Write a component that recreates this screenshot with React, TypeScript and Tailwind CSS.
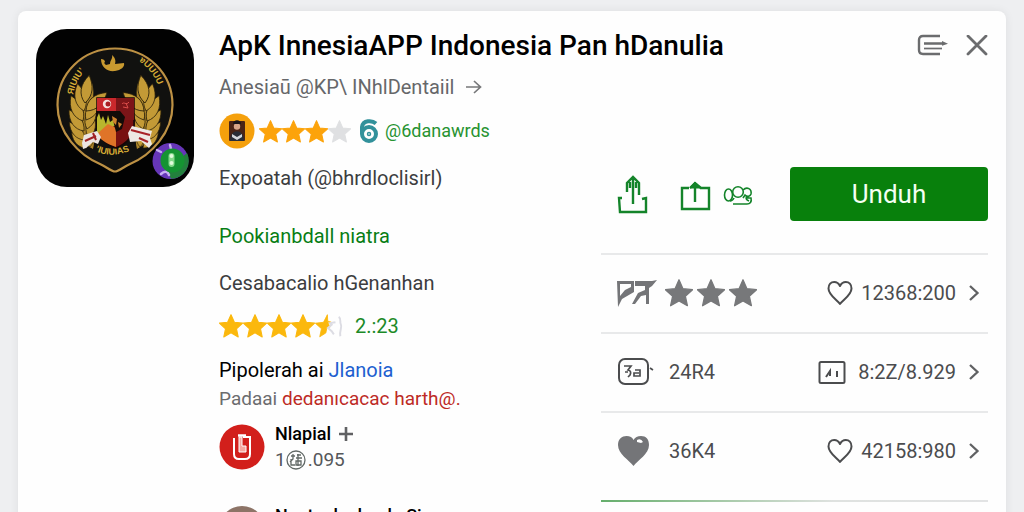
import type { ReactNode } from "react";

const STAR = "M12 1.6l3.1 7 7.6.8-5.7 5.1 1.6 7.5L12 18.2 5.4 22 7 14.5 1.3 9.4l7.6-.8z";

function Star({ className }: { className: string }) {
  return (
    <svg viewBox="1 1 22 22" fill="currentColor" className={className} aria-hidden="true">
      <path d={STAR} strokeLinejoin="round" stroke="currentColor" strokeWidth="1" />
    </svg>
  );
}

function HalfStar() {
  return (
    <svg viewBox="1 1 26 22" className="h-6 w-7" aria-hidden="true">
      <path d="M12.500 1.500L8.900 8.600 1.300 9.400 7 14.500 5.400 22 11 18.500l1-4.500 3-1-2-4 3-.5-3.200-1z" fill="#fbb80d" stroke="#fbb80d" strokeWidth="0.8" />
      <path d="M20 8.500l-5 .8 1.500 1.500-3.500 3 3.500 3 2 3M23 3.500c3 2 .5 5 2 7 1.500 3-1.500 5-.5 11" fill="none" stroke="#dcdce3" strokeWidth="1.800" />
    </svg>
  );
}

function Leaf({ x, y, r, s = 1 }: { x: number; y: number; r: number; s?: number }) {
  return (
    <path
      d="M0 0C-7-4-9-12-5-21C1-15 4-8 0 0Z"
      transform={`translate(${x} ${y}) rotate(${r}) scale(${s})`}
      fill="#c39a36"
      stroke="#2a200a"
      strokeWidth="0.6"
    />
  );
}

function Wing() {
  return (
    <g>
      <path d="M57 120C40 112 35 92 44 68L56 54C60 66 54 80 55 92C56 102 60 110 57 120Z" fill="#a98329" />
      <Leaf x={51} y={119} r={-32} s={1} />
      <Leaf x={49} y={111} r={-28} s={1.1} />
      <Leaf x={48} y={102} r={-22} s={1.2} />
      <Leaf x={47} y={92} r={-12} s={1.3} />
      <Leaf x={48} y={82} r={0} s={1.3} />
      <Leaf x={49} y={74} r={22} s={1.3} />
      <Leaf x={54} y={118} r={14} s={1} />
      <Leaf x={53} y={109} r={24} s={1.1} />
      <Leaf x={51} y={100} r={32} s={1.2} />
      <Leaf x={50} y={91} r={46} s={1.3} />
      <Leaf x={50} y={82} r={62} s={1.3} />
    </g>
  );
}

function AppLogo() {
  return (
    <svg viewBox="0 0 158 158" className="size-[158px] shrink-0" role="img" aria-label="ApK">
      <defs>
        <path id="arcLeft" d="M37 66A50 50 0 0 1 56 35" />
        <path id="arcRight" d="M103 32A50 50 0 0 1 124 64" />
        <path id="arcBottom" d="M59 122Q79 131 101 118" />
      </defs>
      <rect width="158" height="158" rx="31" fill="#020202" />
      <path
        d="M79 19.500C111 19.500 136.500 44 136.500 76C136.500 104 115 126 94 135C87 138 83 142.500 79 142.500C75 142.500 71 138 64 135C43 126 21.500 104 21.500 76C21.500 44 47 19.500 79 19.500Z"
        fill="#11110f"
        stroke="#bd9144"
        strokeWidth="2.200"
      />
      <g fill="#d8ad35" fontFamily="Liberation Sans, sans-serif" fontSize="9" fontWeight="700">
        <text><textPath href="#arcLeft">ЯIUIU’</textPath></text>
        <text><textPath href="#arcRight">ɐUUUU</textPath></text>
        <text><textPath href="#arcBottom">’IUIUIAS</textPath></text>
      </g>
      <path d="M65 30c2 0 4 1 4 3-1 0-1 2 1 3l4-1c0-4 3-5 2-9 3 3 4 5 3 9l9-1c1 4-3 7-9 8-8 1-14-4-14-12Z" fill="#c99a30" />
      <Wing />
      <g transform="translate(158 0) scale(-1 1)"><Wing /></g>
      <path d="M61 69H98V98C98 107 90 115 80 119C69 115 61 107 61 98Z" fill="#781110" stroke="#160706" strokeWidth="1.500" />
      <path d="M61 69H80V82H61Z" fill="#c9282c" />
      <path d="M80 69H98V91H80Z" fill="#7c1518" />
      <path d="M61 82H80V96L61 107Z" fill="#b9b62d" />
      <path d="M61 105L72 95L80 99V118C71 115 63 110 61 105Z" fill="#df7428" />
      <path d="M60 82h24l5 6-3 12-6 3-3-12-3 2-2-7-2 9-3-8-2 4-2-7-3 7Z" fill="#130b08" />
      <path d="M76 87l5 3-1 6-3-3Z M82 93l4 2-3 4Z" fill="#cf822e" />
      <circle cx="71" cy="75" r="4.200" fill="#f4e2df" />
      <circle cx="72" cy="75" r="2.500" fill="#a91e23" />
      <path d="M86 75c2-3 4 2 7-2M87 78l5 1-2-5" stroke="#dc4d4a" strokeWidth="1" fill="none" />
      <path d="M46 114l2-8 13-4 4 6-3 7-5-2-7 6-3 1Z" fill="#ebe5e1" />
      <path d="M49 112l11-5M57 104l3 7" stroke="#a02124" strokeWidth="2" />
      <path d="M92 104l2 9 11-1 8 7 3-4-2-6 2-7-20-5Z" fill="#eee8e4" />
      <path d="M95 101l19 5M103 109l9 4" stroke="#a82228" strokeWidth="2.200" />
      <circle cx="134.500" cy="132" r="18" fill="#6636b8" />
      <path d="M151 124A18 18 0 0 1 135 149.800L131 141Z" fill="#23803d" />
      <path d="M121 121l4 2M134 116l1 4M125 145c4-4 7-2 8 1" stroke="#c7aef2" strokeWidth="2.500" strokeLinecap="round" fill="none" />
      <circle cx="136.500" cy="131.500" r="12" fill="#159332" />
      <rect x="132.500" y="124" width="6" height="14" rx="3" fill="#83d98a" />
      <circle cx="135.500" cy="127" r="2" fill="#e1fbdc" />
      <circle cx="135.500" cy="134" r="2" fill="#e1fbdc" />
    </svg>
  );
}

function Heart({ className }: { className: string }) {
  return (
    <svg viewBox="0 0 26 26" className={className} fill="none" stroke="currentColor" strokeWidth="2" strokeLinejoin="round" aria-hidden="true">
      <path d="M13 24C10 20 1.500 15 1.500 8.500C1.500 4.500 4 2 7.200 2C9.800 2 11.800 3.500 13 6C14.200 3.500 16.200 2 18.800 2C22 2 24.500 4.500 24.500 8.500C24.500 15 16 20 13 24Z" />
    </svg>
  );
}

function Chevron() {
  return (
    <svg viewBox="0 0 12 18" className="h-[18px] w-3" fill="none" stroke="#606163" strokeWidth="2.300" aria-hidden="true">
      <path d="M2 2l7.500 7L2 16" />
    </svg>
  );
}

function StatRow({ left, icon, value, last }: { left: ReactNode; icon: ReactNode; value: string; last?: boolean }) {
  return (
    <li className={last ? "pb-3" : "border-b-2 border-[#e8e9ea] pb-0.5"}>
      <a href="#details" className="flex h-[75px] items-center justify-between pr-2 pl-4 text-xl text-[#4b4c4e]">
        <span className="flex items-center">{left}</span>
        <span className="flex items-center">
          {icon}
          <span className="mr-3 ml-2">{value}</span>
          <Chevron />
        </span>
      </a>
    </li>
  );
}

export default function App() {
  return (
    <div className="h-screen overflow-hidden bg-[#eeeff1] px-[18px] pt-[11px] font-[Roboto,sans-serif] whitespace-nowrap">
      <main className="flex min-h-full gap-[25px] rounded-t-lg bg-[#fefefe] px-[18px] pt-[18px] shadow-[0_0_10px_rgba(0,0,0,0.07)]">
        <AppLogo />
        <div className="min-w-0 flex-1">
          <header className="flex h-[34px] items-center justify-between">
            <h1 className="text-[28px] font-medium text-black">ApK InnesiaAPP Indonesia Pan hDanulia</h1>
            <div className="flex items-center gap-4 text-[#6b6c6e]">
              <button aria-label="Menu">
                <svg viewBox="0 0 34 24" className="h-6 w-[34px]" fill="none" stroke="currentColor" strokeWidth="2.400" aria-hidden="true">
                  <path d="M24 2H7Q3 2 3 6V16Q3 20 7 20H24M8 9.500H27" />
                  <path d="M8 14.500H26" strokeWidth="1.700" />
                  <path d="M26 7l6 2.800-6 2Z" fill="currentColor" stroke="none" />
                </svg>
              </button>
              <button aria-label="Close">
                <svg viewBox="0 0 22 22" className="size-[22px]" stroke="currentColor" strokeWidth="2.800" strokeLinecap="round" aria-hidden="true">
                  <path d="M2 1l18 18M20 1L2 19" />
                </svg>
              </button>
            </div>
          </header>

          <div className="flex justify-between">
            <section className="pt-3 text-xl leading-6 text-[#3c3d3f]">
              <p className="flex items-center gap-3 text-[#66676a]">
                Anesiaū @KP\ INhlDentaiil
                <svg viewBox="0 0 16 16" className="size-4" fill="none" stroke="#77787a" strokeWidth="1.700" aria-hidden="true">
                  <path d="M0 8h14M8 2l6.500 6L8 14" />
                </svg>
              </p>
              <div className="mt-3 flex h-10 items-center">
                <svg viewBox="0 0 36 36" className="size-9" aria-hidden="true">
                  <circle cx="18" cy="18" r="17.500" fill="#f5a00c" />
                  <rect x="10" y="8" width="16" height="20" rx="1" fill="#4b2416" />
                  <circle cx="18" cy="13.500" r="3.200" fill="#d8a488" />
                  <path d="M14 11c0-5 8-5 8 0Z" fill="#1b1519" />
                  <path d="M11 28c0-13 14-13 14 0Z" fill="#292d38" />
                  <path d="M13 21l5 3 5-3v3l-5 3-5-3Z" fill="#d4d7dd" />
                </svg>
                <div className="ml-1 flex">
                  <Star className="size-[23px] text-[#fca30b]" />
                  <Star className="size-[23px] text-[#fca30b]" />
                  <Star className="size-[23px] text-[#fca30b]" />
                  <Star className="size-[23px] text-[#dfe0e2]" />
                </div>
                <svg viewBox="0 0 20 24" className="ml-2 h-6 w-5" fill="none" stroke="#32919b" strokeWidth="4" aria-hidden="true">
                  <path d="M17 4.500C13 1 4 1 3 8V15" />
                  <circle cx="10" cy="15" r="7" />
                  <circle cx="10" cy="15" r="1.500" strokeWidth="1.500" />
                </svg>
                <span className="ml-1.5 text-lg text-[#279331]">@6danawrds</span>
              </div>
              <p className="mt-[15px]">Expoatah (@bhrdloclisirl)</p>
              <p className="mt-[34px] text-[#087d14]">
                <a href="#developer">Pookianbdall niatra</a>
              </p>
              <p className="mt-[23px]">Cesabacalio hGenanhan</p>
              <div className="mt-[19px] flex items-center">
                <div className="flex items-center">
                  <Star className="size-6 text-[#fbb80d]" />
                  <Star className="size-6 text-[#fbb80d]" />
                  <Star className="size-6 text-[#fbb80d]" />
                  <Star className="size-6 text-[#fbb80d]" />
                  <HalfStar />
                </div>
                <span className="ml-3 text-[#1c8a28]">2.:23</span>
              </div>
              <p className="mt-5 text-black">
                Pipolerah ai <a href="#author" className="text-[#205fd0]">Jlanoia</a>
              </p>
              <p className="mt-[5px] text-[19px] text-[#6b6c6e]">
                Padaai <span className="text-[#bd2a25]">dedanıcacac harth@.</span>
              </p>
              <div className="mt-[13px] flex items-center gap-2.5">
                <svg viewBox="0 0 46 46" className="size-[46px]" aria-hidden="true">
                  <circle cx="23" cy="23" r="22.500" fill="#d21f1b" />
                  <path d="M15 14v16q0 5 5 5h6q5 0 5-5V13h-7" fill="none" stroke="#fff" strokeWidth="2" />
                  <path d="M20 13h3v9h4v6h-7Z" fill="#f5a8a0" stroke="#fff" strokeWidth="1" />
                  <path d="M19 11.500h8" stroke="#fff" strokeWidth="2.500" />
                </svg>
                <div>
                  <p className="flex h-5 items-center gap-2 text-lg font-medium text-black">
                    Nlapial
                    <svg viewBox="0 0 14 14" className="size-3.5" stroke="#606163" strokeWidth="2.600" aria-hidden="true">
                      <path d="M7 0v14M0 7h14" />
                    </svg>
                  </p>
                  <p className="mt-1.5 flex h-5 items-center text-[19px] text-[#55575a]">
                    1
                    <svg viewBox="0 0 20 20" className="size-5" fill="none" stroke="#626966" strokeWidth="1.300" aria-hidden="true">
                      <circle cx="10" cy="10" r="9" />
                      <path d="M5 6h4M7 4v5l-3 3M5 9v6h4M11 5h4M10 8h6M12 4v5M10 11h5v4h-5zM12 9v7" />
                    </svg>
                    <span className="ml-0.5">.095</span>
                  </p>
                </div>
              </div>
              <div className="mt-9 flex gap-2.5">
                <svg viewBox="0 0 46 46" className="size-[46px]" aria-hidden="true">
                  <circle cx="23" cy="23" r="23" fill="#8d7467" />
                </svg>
                <p className="text-lg leading-5 font-medium text-black">Nanta danlanda Sinan</p>
              </div>
            </section>

            <section className="w-[387px] pt-[104px]">
              <div className="flex h-[54px] items-center text-[#14842a]">
                <button className="ml-4" aria-label="Upload">
                  <svg viewBox="0 0 32 40" className="h-10 w-8" fill="none" stroke="currentColor" strokeWidth="2.400" aria-hidden="true">
                    <path d="M5 24H2L3 38H29V24L25 25M16 30V3M10 18V9L16 3L22 9V21M13 8v6M19 8v6" />
                  </svg>
                </button>
                <button className="ml-7" aria-label="Share">
                  <svg viewBox="0 0 34 34" className="size-[34px]" fill="none" stroke="currentColor" strokeWidth="2.400" aria-hidden="true">
                    <path d="M12 11H5V32H32V11H23M18 25V6M13 11L18 6L24 11" />
                    <path d="M13 11L18 5L24 11Z" fill="currentColor" strokeWidth="1" />
                  </svg>
                </button>
                <button className="ml-3" aria-label="Friends">
                  <svg viewBox="0 0 30 24" className="h-6 w-[30px]" fill="none" stroke="currentColor" strokeWidth="1.600" aria-hidden="true">
                    <ellipse cx="5.500" cy="13" rx="4" ry="6" />
                    <circle cx="15" cy="10" r="5.300" />
                    <path d="M20 8c4-4 9-1 8 4-1 3-4 3-6 1l-2 3M24 16h4c1 4-1 6-4 6H10M11 16c-1 2-3 3-4 3M24 14c-2 3 0 4 2 5" />
                  </svg>
                </button>
                <button className="ml-auto h-[54px] w-[198px] rounded bg-[#08800c] text-[26px] text-[#f4fff2]">Unduh</button>
              </div>
              <ul className="mt-8 border-t-2 border-[#e8e9ea]">
                <StatRow
                  left={
                    <>
                      <svg viewBox="0 0 42 30" className="mr-1.5 h-[30px] w-[42px]" fill="#747578" aria-hidden="true">
                        <path fillRule="evenodd" d="M0 3H17V14L5 21L1 29ZM3 6V18L8 12L14 9V6Z" />
                        <path d="M18 3H35L40 2L35 8L32 10V26H29V17L24 18L18 26H15L21 15L28 12V8H18Z" />
                      </svg>
                      <span className="flex gap-1">
                        <Star className="size-7 text-[#77787a]" />
                        <Star className="size-7 text-[#77787a]" />
                        <Star className="size-7 text-[#77787a]" />
                      </span>
                    </>
                  }
                  icon={<Heart className="size-[26px]" />}
                  value="12368:200"
                />
                <StatRow
                  left={
                    <>
                      <svg viewBox="0 0 38 30" className="mr-3.5 h-[30px] w-[38px]" fill="none" stroke="currentColor" strokeWidth="2" aria-hidden="true">
                        <rect x="2" y="2" width="29" height="25" rx="6" />
                        <path d="M7 9h7l-3 4q4 1 2 5l-2 2M8 15h3M18 13h5v6h-6v-3h5M33 11l3 2" strokeWidth="1.700" />
                      </svg>
                      24R4
                    </>
                  }
                  icon={
                    <svg viewBox="0 0 28 26" className="mr-1 h-[26px] w-7" fill="none" stroke="currentColor" strokeWidth="2" aria-hidden="true">
                      <rect x="1.500" y="3" width="25" height="21" rx="1.500" />
                      <path d="M8 18l4-6v5M19 12v6" />
                    </svg>
                  }
                  value="8:2Z/8.929"
                />
                <StatRow
                  last
                  left={
                    <>
                      <svg viewBox="0 0 34 32" className="mr-[18px] h-8 w-[34px]" fill="#747578" aria-hidden="true">
                        <path d="M16.500 31C12 25 1 19 1 10C1 4 5 1 9.500 1C13 1 15.500 2.500 16.500 5C18 2.500 20.500 1 24 1C29 1 32 4 32 10C32 19 21 25 16.500 31Z" />
                        <path d="M20 5q4-2 6 2l-2 1-4-1Z" fill="#fff" />
                      </svg>
                      36K4
                    </>
                  }
                  icon={<Heart className="size-[26px]" />}
                  value="42158:980"
                />
              </ul>
              <div className="h-0.5 bg-linear-to-r from-[#65ae6c] via-[#dfe2e0] via-60% to-[#e2e3e4]" />
            </section>
          </div>
        </div>
      </main>
    </div>
  );
}
